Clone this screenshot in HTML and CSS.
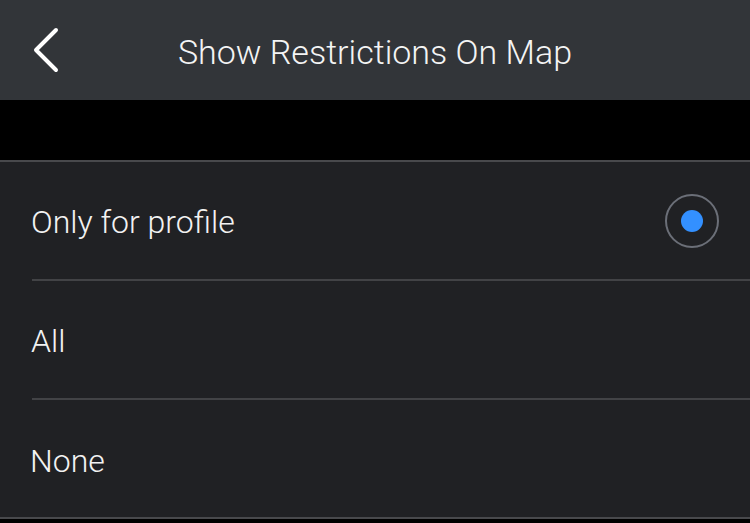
FILE: index.html
```html
<!DOCTYPE html>
<html lang="en">
<head>
  <meta charset="UTF-8" />
  <meta name="viewport" content="width=device-width, initial-scale=1.0" />
  <title>Show Restrictions On Map</title>
  <link rel="stylesheet" href="styles.css">
</head>
<body>

  <!-- Top bar -->
  <header class="top-bar">
    <button class="back-btn" aria-label="Back">
      <svg width="30" height="46" viewBox="0 0 30 46">
        <path d="M25 3 L5 23 L25 43" fill="none" stroke="#ffffff" stroke-width="4" stroke-linecap="round" stroke-linejoin="round"/>
      </svg>
    </button>
    <h1 class="title">Show Restrictions On Map</h1>
  </header>

  <div class="spacer"></div>

  <!-- Options -->
  <ul class="option-list">
    <li class="option selected">
      <span class="option-label">Only for profile</span>
      <span class="radio"><span class="radio-dot"></span></span>
    </li>
    <li class="option">
      <span class="option-label">All</span>
    </li>
    <li class="option">
      <span class="option-label">None</span>
    </li>
  </ul>

</body>
</html>
```

FILE: styles.css
```css
/* Base */
body {
  margin: 0;
  background: #000;
  font-family: Roboto, "Noto Sans", sans-serif;
  color: #f2f2f2;
}

/* Top bar */
.top-bar {
  position: relative;
  height: 100px;
  background-color: #323539;
  display: flex;
  align-items: center;
  justify-content: center;
}
.back-btn {
  position: absolute;
  left: 31px;
  top: 27px;
  padding: 0;
  border: none;
  background: none;
  display: flex;
}
.title {
  margin: 0;
  padding-top: 3px;
  font-size: 34px;
  font-weight: 300;
  color: #f4f4f4;
}

.spacer {
  height: 60px;
  background: #000;
}

/* Option list */
.option-list {
  list-style: none;
  margin: 0;
  padding: 0;
  background: #202124;
  border-top: 2px solid #48494c;
  border-bottom: 2px solid #48494c;
}
.option {
  height: 117px;
  margin-left: 32px;
  padding-right: 31px;
  display: flex;
  align-items: center;
  justify-content: space-between;
  border-bottom: 2px solid #424346;
}
.option:last-child {
  border-bottom: none;
}
.option-label {
  font-size: 32px;
  font-weight: 300;
  margin-left: -1px;
  padding-top: 3px;
}
.option:last-child .option-label {
  margin-left: -2px;
  padding-top: 5px;
}

/* Radio */
.radio {
  width: 50px;
  height: 50px;
  border: 2px solid #6b6f78;
  border-radius: 50%;
  display: flex;
  align-items: center;
  justify-content: center;
}
.radio-dot {
  width: 22px;
  height: 22px;
  border-radius: 50%;
  background: #3390ff;
}
```
